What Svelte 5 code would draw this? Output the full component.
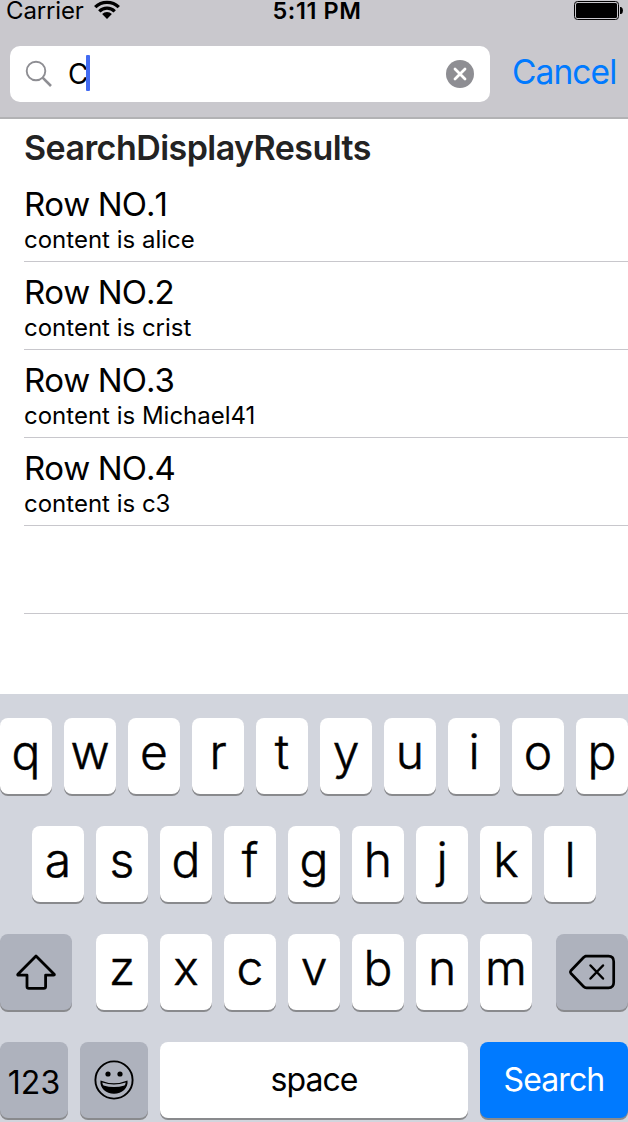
<script>
  const rows = ['alice', 'crist', 'Michael41', 'c3'];
  const top = [...'qwertyuiop'];
  const middle = [...'asdfghjkl'];
  const bottom = [...'zxcvbnm'];
</script>

<div class="screen">
  <header>
    <div class="status">
      <div class="carrier">
        <span>Carrier</span>
        <svg width="26" height="20" viewBox="0 0 26 20">
          <g fill="none" stroke="#000" stroke-width="3.3">
            <path d="M1.2 7.2A16.6 16.6 0 0 1 24.8 7.2" />
            <path d="M5.3 11.3A10.9 10.9 0 0 1 20.7 11.3" />
          </g>
          <path d="M8.1 14.1A7 7 0 0 1 17.9 14.1L13 19Z" />
        </svg>
      </div>
      <span class="time">5:11 PM</span>
      <svg class="battery" width="49" height="20" viewBox="0 0 49 20">
        <rect x="0.5" y="1.5" width="44" height="18" rx="3" fill="none" stroke="#000" />
        <rect x="2" y="3" width="41" height="15" rx="1.5" />
        <path d="M46 7h1.2q1.8 1 1.8 3.500t-1.800 3.500H46Z" />
      </svg>
    </div>
    <div class="searchbar">
      <div class="field">
        <svg class="glass" width="28" height="28" viewBox="0 0 28 28" fill="none" stroke="#8e8e93">
          <circle cx="11" cy="11" r="9.300" stroke-width="1.900" />
          <path d="M17.600 17.600L26 26" stroke-width="2.600" />
        </svg>
        <span class="query">C</span><span class="caret"></span>
        <svg class="clear" width="28" height="28" viewBox="0 0 28 28">
          <circle cx="14" cy="14" r="14" fill="#8e8e93" />
          <path d="M9 9L19 19M19 9L9 19" stroke="#fff" stroke-width="2.800" stroke-linecap="round" />
        </svg>
      </div>
      <span class="cancel">Cancel</span>
    </div>
  </header>

  <main>
    <h1>SearchDisplayResults</h1>
    {#each rows as name, i}
      <div class="row">
        <div class="title">Row NO.{i + 1}</div>
        <div class="sub">content is {name}</div>
      </div>
    {/each}
    <div class="row"></div>
  </main>

  <div class="keyboard">
    <div class="keys">
      {#each top as k}<div class="key">{k}</div>{/each}
    </div>
    <div class="keys">
      {#each middle as k}<div class="key">{k}</div>{/each}
    </div>
    <div class="keys spread">
      <div class="key gray shift">
        <svg width="40" height="36" viewBox="0 0 40 36" fill="none" stroke="#000" stroke-width="2.800" stroke-linejoin="round">
          <path d="M20 2L38.200 20.300Q38.700 21.200 37.500 21.200H29.600V32.500Q29.600 34.400 27.700 34.400H12.900Q11 34.400 11 32.500V21.200H2.700Q1.300 21.200 1.900 20.300Z" />
        </svg>
      </div>
      <div class="letters">
        {#each bottom as k}<div class="key">{k}</div>{/each}
      </div>
      <div class="key gray shift">
        <svg width="48" height="36" viewBox="0 0 48 36" fill="none" stroke="#000" stroke-width="2.700" stroke-linejoin="round" stroke-linecap="round">
          <path d="M17.500 2.200H40.500Q45.700 2.200 45.700 7.500V28.500Q45.700 33.800 40.500 33.800H18.500Q16.800 33.800 15.500 32.500L2.800 19.300Q1.800 18 2.800 16.700L15.500 3.500Q16.800 2.200 18.500 2.200Z" />
          <path d="M22.500 11.500L35 24.500M35 11.500L22.500 24.500" stroke-width="2.500" />
        </svg>
      </div>
    </div>
    <div class="keys">
      <div class="key gray small num">123</div>
      <div class="key gray small emoji">
        <svg width="40" height="40" viewBox="0 0 40 40">
          <circle cx="20" cy="20" r="18.600" fill="none" stroke="#000" stroke-width="1.900" />
          <circle cx="14" cy="14" r="2.600" />
          <circle cx="26" cy="14" r="2.600" />
          <path d="M6.500 20.500Q20 26 33.500 20.500C34.500 28 28 33.800 20 33.800S5.500 28 6.500 20.500Z" />
          <path d="M8.300 22.400Q20 26.500 31.700 22.400Q31.500 24.300 30.500 25.500Q20 28.500 9.500 25.500Q8.500 24.300 8.300 22.400Z" fill="#aeb2bd" />
        </svg>
      </div>
      <div class="key small space">space</div>
      <div class="key small go">Search</div>
    </div>
  </div>
</div>

<style>
  :global(body) { margin: 0; background: #fff; }
  .screen {
    width: 628px;
    height: 1122px;
    overflow: hidden;
    display: flex;
    flex-direction: column;
    font-family: Inter, "Liberation Sans", sans-serif;
    color: #000;
    white-space: nowrap;
  }
  svg { display: block; flex: none; }
  header {
    box-sizing: border-box;
    height: 119px;
    flex: none;
    background: #c9c8cd;
    border-bottom: 2px solid #b2b2b4;
  }
  .status {
    height: 46px;
    display: grid;
    grid-template-columns: 1fr auto 1fr;
    align-items: start;
    padding: 0 5px 0 6px;
    font-size: 24px;
    line-height: 22px;
  }
  .carrier { display: flex; gap: 10px; letter-spacing: -0.15px; }
  .time { font-weight: 600; padding-left: 5px; letter-spacing: 0.6px; font-size: 23.5px; }
  .battery { justify-self: end; }
  .searchbar { display: flex; height: 56px; padding-left: 10px; }
  .field {
    box-sizing: border-box;
    width: 480px;
    display: flex;
    align-items: center;
    background: #fff;
    border-radius: 10px;
    padding: 0 16px 0 15px;
  }
  .query { width: 18px; margin-left: 15px; font-size: 28px; line-height: 54px; }
  .caret { width: 4px; height: 36px; margin-top: -3px; border-radius: 1px; background: #426bf2; }
  .clear { margin-left: auto; }
  .cancel { margin-left: 22px; font-size: 33.5px; line-height: 53px; letter-spacing: -0.9px; color: #007aff; }
  main { height: 575px; flex: none; padding-left: 24px; }
  h1 { margin: 0; height: 55px; font-size: 34px; line-height: 57px; font-weight: 600; letter-spacing: -0.55px; color: #232323; }
  .row { box-sizing: border-box; height: 88px; padding-top: 10px; border-bottom: 1px solid #c8c7cc; }
  .title { font-size: 33px; line-height: 41px; letter-spacing: -0.9px; font-kerning: none; }
  .sub { margin-top: 1px; font-size: 24px; line-height: 28px; }
  .keyboard {
    flex: 1;
    display: flex;
    flex-direction: column;
    gap: 32px;
    padding-top: 24px;
    background: #d2d5dd;
  }
  .keys { display: flex; justify-content: center; gap: 12px; flex: none; }
  .spread { justify-content: space-between; }
  .letters { display: flex; gap: 12px; }
  .key {
    box-sizing: border-box;
    width: 52px;
    height: 76px;
    flex: none;
    display: flex;
    justify-content: center;
    border-radius: 8px;
    background: #fff;
    box-shadow: 0 2px 0 #898a8d;
    font-size: 48px;
    line-height: 68px;
    font-weight: 300;
    -webkit-text-stroke: 0.5px;
  }
  .gray { background: #aeb2bd; align-items: center; }
  .shift { width: 72px; }
  .small { font-size: 32px; line-height: 75px; letter-spacing: -0.9px; font-weight: 400; -webkit-text-stroke: 0; }
  .num, .emoji { width: 68px; }
  .num { line-height: 40px; padding-top: 5px; letter-spacing: 0; }
  .emoji { padding: 0 1px 1px 0; }
  .space { width: 308px; }
  .go { width: 148px; background: #007aff; color: #fff; }
</style>
